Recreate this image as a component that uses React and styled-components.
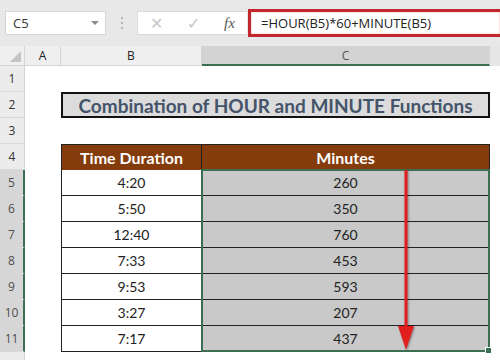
import React from "react";
import styled, { createGlobalStyle } from "styled-components";

const Global = createGlobalStyle`
  html, body { margin: 0; padding: 0; background: #fff; }
  body { font-family: "Lato", "Liberation Sans", sans-serif; }
`;

const Page = styled.div`
  width: 500px;
  height: 360px;
  overflow: hidden;
  background: #fff;
  display: flex;
  flex-direction: column;
`;

const Toolbar = styled.div`
  height: 46px;
  flex: none;
  background: #e8e8e8;
  display: flex;
  align-items: center;
  padding-left: 5px;
  box-sizing: border-box;
`;

const NameBox = styled.div`
  width: 101px;
  height: 24px;
  background: #fff;
  border: 1px solid #d6d6d6;
  box-sizing: border-box;
  display: flex;
  align-items: center;
  justify-content: space-between;
  padding: 0 6px 0 7px;
  font-family: "Open Sans", "Liberation Sans", sans-serif;
  font-size: 13px;
  color: #333;
`;

const Caret = styled.span`
  width: 0;
  height: 0;
  border-left: 4px solid transparent;
  border-right: 4px solid transparent;
  border-top: 4px solid #8a8a8a;
`;

const Dots = styled.div`
  width: 31px;
  display: flex;
  flex-direction: column;
  align-items: center;
  gap: 3px;
  span {
    width: 2px;
    height: 2px;
    background: #b5b5b5;
  }
`;

const FxBox = styled.div`
  width: 110px;
  height: 24px;
  background: #fff;
  border: 1px solid #dadada;
  border-right: none;
  box-sizing: border-box;
  display: flex;
  align-items: center;
  justify-content: space-around;
  color: #c8c8c8;
  font-size: 16px;
`;

const Fx = styled.span`
  font-family: "Liberation Serif", serif;
  font-style: italic;
  color: #555;
  font-size: 15px;
`;

const FormulaBox = styled.div`
  flex: 1;
  height: 28px;
  margin-left: 1px;
  border: 3px solid #c1272d;
  border-right: none;
  box-shadow: inset 0 0 2px #f3a0a0;
  background: #fff;
  box-sizing: border-box;
  display: flex;
  align-items: center;
  padding-left: 10px;
  font-family: "Open Sans", "Liberation Sans", sans-serif;
  font-size: 13px;
  color: #222;
`;

const Sheet = styled.div`
  position: relative;
  flex: 1;
  display: grid;
  grid-template-columns: 25px 36px 141px 288px 1fr;
  grid-template-rows: 20px repeat(12, 26px);
  font-family: "Lato", "Liberation Sans", sans-serif;
`;

const Corner = styled.div`
  background: #efefef;
  border-right: 1px solid #d4d4d4;
  border-bottom: 1px solid #d4d4d4;
  position: relative;
  &::after {
    content: "";
    position: absolute;
    right: 3px;
    bottom: 3px;
    border-left: 11px solid transparent;
    border-bottom: 11px solid #c4c4c4;
  }
`;

const ColHead = styled.div`
  background: ${(p) => (p.$sel ? "#d3d3d3" : "#efefef")};
  border-right: 1px solid #d4d4d4;
  border-bottom: ${(p) => (p.$sel ? "2px solid #3c6e52" : "1px solid #d4d4d4")};
  display: flex;
  align-items: center;
  justify-content: center;
  font-family: "Open Sans", "Liberation Sans", sans-serif;
  font-size: 12px;
  color: ${(p) => (p.$sel ? "#555" : "#222")};
  box-sizing: border-box;
`;

const RowHead = styled.div`
  background: ${(p) => (p.$sel ? "#d6d6d6" : "#ececec")};
  border-right: ${(p) => (p.$sel ? "2px solid #3c6e52" : "1px solid #d4d4d4")};
  border-bottom: 1px solid #d8d8d8;
  display: flex;
  align-items: center;
  justify-content: center;
  font-family: "Open Sans", "Liberation Sans", sans-serif;
  font-size: 12px;
  color: ${(p) => (p.$sel ? "#4f4f4f" : "#333")};
  box-sizing: border-box;
`;

const Empty = styled.div`
  background: ${(p) => (p.$gray ? "#e6e6e6" : "#fff")};
`;

const Title = styled.div`
  grid-column: 3 / 5;
  background: #dcdcdc;
  border: 2px solid #111;
  box-sizing: border-box;
  display: flex;
  align-items: center;
  justify-content: center;
  font-weight: 700;
  font-size: 19px;
  color: #44546a;
`;

const Head = styled.div`
  background: #843c0c;
  color: #fff;
  font-weight: 700;
  font-size: 16px;
  display: flex;
  align-items: center;
  justify-content: center;
  border-top: 1px solid #222;
  border-left: ${(p) => (p.$first ? "1px solid #222" : "none")};
  border-right: 1px solid #222;
  box-sizing: border-box;
`;

const Cell = styled.div`
  background: ${(p) => (p.$shade ? "#c9c9c9" : "#fff")};
  border-left: ${(p) => (p.$first ? "1px solid #222" : "none")};
  border-right: 1px solid #222;
  border-bottom: 1px solid #222;
  box-sizing: border-box;
  display: flex;
  align-items: center;
  justify-content: center;
  font-size: 14px;
  color: #222;
`;

const Selection = styled.div`
  position: absolute;
  left: 201px;
  top: 123px;
  width: 289px;
  height: 183px;
  border: 2px solid #3c6e52;
  box-sizing: border-box;
  pointer-events: none;
  &::after {
    content: "";
    position: absolute;
    right: -4px;
    bottom: -4px;
    width: 5px;
    height: 5px;
    background: #3c6e52;
    border: 1px solid #fff;
  }
`;

const Arrow = styled.svg`
  position: absolute;
  left: 395px;
  top: 124px;
  filter: drop-shadow(1px 1px 1px rgba(0, 0, 0, 0.35));
`;

const times = ["4:20", "5:50", "12:40", "7:33", "9:53", "3:27", "7:17"];
const minutes = [260, 350, 760, 453, 593, 207, 437];

export default function App() {
  return (
    <Page>
      <Global />
      <Toolbar>
        <NameBox>
          C5
          <Caret />
        </NameBox>
        <Dots>
          <span />
          <span />
          <span />
        </Dots>
        <FxBox>
          <span>✕</span>
          <span>✓</span>
          <Fx>fx</Fx>
        </FxBox>
        <FormulaBox>=HOUR(B5)*60+MINUTE(B5)</FormulaBox>
      </Toolbar>
      <Sheet>
        <Corner />
        <ColHead>A</ColHead>
        <ColHead>B</ColHead>
        <ColHead $sel>C</ColHead>
        <Empty $gray />

        <RowHead>1</RowHead>
        <Empty />
        <Empty />
        <Empty />
        <Empty />

        <RowHead>2</RowHead>
        <Empty />
        <Title>Combination of HOUR and MINUTE Functions</Title>
        <Empty />

        <RowHead>3</RowHead>
        <Empty />
        <Empty />
        <Empty />
        <Empty />

        <RowHead>4</RowHead>
        <Empty />
        <Head $first>Time Duration</Head>
        <Head>Minutes</Head>
        <Empty />

        {times.map((t, i) => (
          <React.Fragment key={i}>
            <RowHead $sel>{i + 5}</RowHead>
            <Empty />
            <Cell $first>{t}</Cell>
            <Cell $shade>{minutes[i]}</Cell>
            <Empty />
          </React.Fragment>
        ))}

        <RowHead />
        <Empty />
        <Empty />
        <Empty />
        <Empty />

        <Selection />
        <Arrow width="22" height="182" viewBox="0 0 22 182">
          <rect x="9.5" y="0" width="3" height="160" fill="#e21f1f" />
          <polygon points="3,156 19,156 11,180" fill="#e21f1f" />
        </Arrow>
      </Sheet>
    </Page>
  );
}
